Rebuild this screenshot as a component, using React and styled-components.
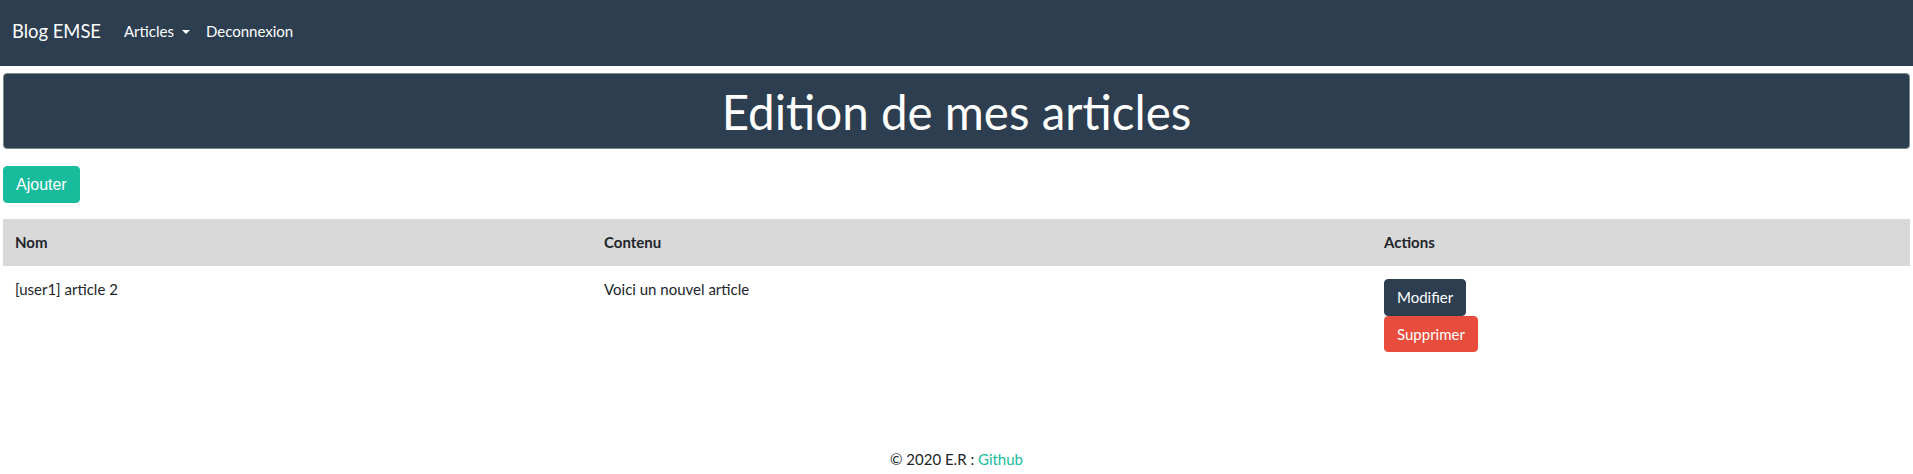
import React from 'react'
import styled, { createGlobalStyle } from 'styled-components'

const GlobalStyle = createGlobalStyle`
    body {
        margin: 0;
        font-family: Lato, "Open Sans", sans-serif;
        font-size: 15px;
        line-height: 1.5;
        color: #212529;
        background: #ffffff;
    }
`;

const Navbar = styled.nav`
    height: 66px;
    background-color: #2c3e50;
    display: flex;
    align-items: center;
    padding: 0 12px;
    box-sizing: border-box;
`;

const Brand = styled.a`
    color: #ffffff;
    font-size: 18.4px;
    margin-right: 15px;
    text-decoration: none;
    margin-top: -3px;
`;

const NavLink = styled.a`
    color: #ffffff;
    padding: 8px;
    text-decoration: none;
    display: flex;
    align-items: center;
    margin-top: -3px;
`;

const Caret = styled.span`
    display: inline-block;
    margin-left: 8px;
    border-top: 4.5px solid #ffffff;
    border-left: 4.5px solid transparent;
    border-right: 4.5px solid transparent;
`;

const Main = styled.main`
    padding: 0 3px;
`;

const Banner = styled.div`
    margin-top: 7px;
    height: 76px;
    box-sizing: border-box;
    background-color: #2c3e50;
    border: 1px solid #7b8a8b;
    border-radius: 4px;
    display: flex;
    align-items: center;
    justify-content: center;
`;

const Title = styled.h1`
    margin: 0;
    color: #ffffff;
    font-size: 47.5px;
    font-weight: 400;
    line-height: 1.2;
`;

const Button = styled.button`
    font-family: ${p => p.$arial ? '"Liberation Sans", Arial, sans-serif' : 'Lato, sans-serif'};
    font-size: ${p => p.$arial ? '16px' : '15px'};
    color: #ffffff;
    background-color: ${p => p.$bg};
    border: 1px solid ${p => p.$bg};
    border-radius: 4px;
    height: ${p => p.$h || 37}px;
    padding: 0 ${p => p.$px || 12}px;
    line-height: 1;
    display: block;
    cursor: pointer;
`;

const AddRow = styled.div`
    margin-top: 17px;
`;

const Table = styled.table`
    margin-top: 16px;
    width: 100%;
    border-collapse: collapse;
    table-layout: fixed;
`;

const Th = styled.th`
    background-color: #d9d9d9;
    text-align: left;
    font-weight: 700;
    padding: 12px;
    height: 47px;
    box-sizing: border-box;
    width: ${p => p.$w}px;
`;

const Td = styled.td`
    padding: 12px;
    vertical-align: top;
`;

const Actions = styled.div`
    display: flex;
    flex-direction: column;
    align-items: flex-start;
    margin-top: 1px;
`;

const Footer = styled.footer`
    margin-top: 84px;
    text-align: center;
`;

const FooterLink = styled.a`
    color: #18bc9c;
    text-decoration: none;
`;

const articles = [
    { nom: '[user1] article 2', contenu: 'Voici un nouvel article' },
];

const App = () => {
    return (
        <>
            <GlobalStyle />
            <Navbar>
                <Brand href="#">Blog EMSE</Brand>
                <NavLink href="#">Articles<Caret /></NavLink>
                <NavLink href="#">Deconnexion</NavLink>
            </Navbar>
            <Main>
                <Banner>
                    <Title>Edition de mes articles</Title>
                </Banner>
                <AddRow>
                    <Button $bg="#18bc9c" $arial $px={12}>Ajouter</Button>
                </AddRow>
                <Table>
                    <thead>
                        <tr>
                            <Th $w={589}>Nom</Th>
                            <Th $w={780}>Contenu</Th>
                            <Th>Actions</Th>
                        </tr>
                    </thead>
                    <tbody>
                        {articles.map(a => (
                            <tr key={a.nom}>
                                <Td>{a.nom}</Td>
                                <Td>{a.contenu}</Td>
                                <Td>
                                    <Actions>
                                        <Button $bg="#2c3e50">Modifier</Button>
                                        <Button $bg="#e74c3c" $h={36}>Supprimer</Button>
                                    </Actions>
                                </Td>
                            </tr>
                        ))}
                    </tbody>
                </Table>
            </Main>
            <Footer>
                © 2020 E.R : <FooterLink href="#">Github</FooterLink>
            </Footer>
        </>
    )
}

export default App
